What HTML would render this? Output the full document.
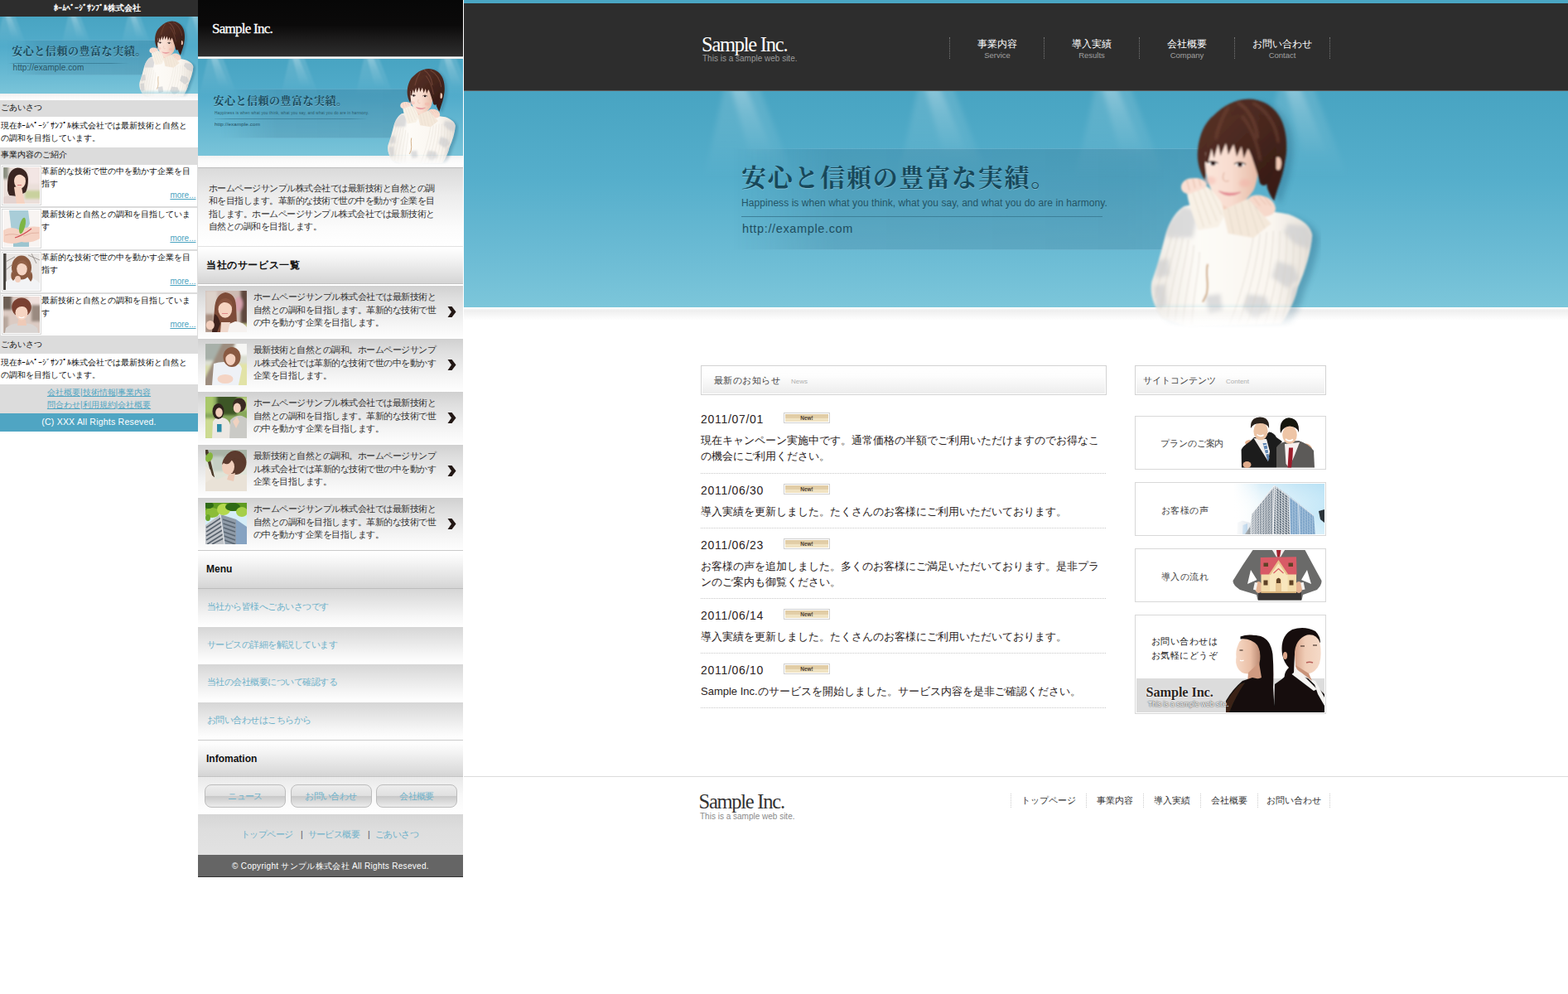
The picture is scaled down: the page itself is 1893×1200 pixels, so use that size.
<!DOCTYPE html>
<html lang="ja">
<head>
<meta charset="utf-8">
<title>Sample Inc.</title>
<style>
*{margin:0;padding:0;box-sizing:border-box;}
html,body{width:1893px;height:1200px;overflow:hidden;background:#fff;}
body{position:relative;font-family:"Liberation Sans",sans-serif;color:#333;}
.abs{position:absolute;}
.serif{font-family:"Liberation Serif",serif;}
a{color:inherit;text-decoration:none;}
/* ---------- PC ---------- */
#pc{position:absolute;left:560px;top:0;width:1333px;height:1200px;background:#fff;overflow:hidden;}
#pc .topbar{position:absolute;left:0;top:0;width:1333px;height:4px;background:#4aa6c4;}
#pc .head{position:absolute;left:0;top:4px;width:1333px;height:106px;background:#2d2d2d;border-bottom:1px solid #5e5e5e;}
#pc .logo{position:absolute;left:287px;top:35.500px;font-size:24.500px;line-height:28px;color:#fff;letter-spacing:-1.250px;white-space:nowrap;}
#pc .logosub{position:absolute;left:288px;top:60.800px;font-size:10px;line-height:12px;color:#9a9a9a;white-space:nowrap;}
#pc .nav{position:absolute;top:41px;height:26px;width:115px;border-left:1px dotted #777;text-align:center;}
#pc .nav b{display:block;font-weight:normal;font-size:12px;line-height:14px;color:#fff;margin-top:.500px;}
#pc .nav i{display:block;font-style:normal;font-size:9.500px;line-height:11px;color:#a0a0a0;margin-top:1px;}
#pc .hero{position:absolute;left:0;top:110px;width:1333px;height:261px;background:linear-gradient(#48a4c2 0%,#55aecb 40%,#6bbbd4 75%,#7cc6da 100%);overflow:hidden;}
#pc .heroshadow{position:absolute;left:0;top:371px;width:1333px;height:16px;background:linear-gradient(#fff 0,#eeeeee 25%,#f7f7f7 60%,#fff 100%);}
.spot{position:absolute;top:0;width:150px;height:140px;}
#pc .panel{position:absolute;left:286px;top:69px;width:640px;height:123px;background:linear-gradient(90deg,rgba(40,90,120,.17) 0,rgba(40,90,120,.2) 80%,rgba(40,90,120,.14) 100%);border-top:1px solid rgba(130,200,225,.45);border-bottom:1px solid rgba(130,200,225,.45);-webkit-mask-image:linear-gradient(90deg,transparent 6%,#000 24%);mask-image:linear-gradient(90deg,transparent 6%,#000 24%);}
#pc .h1{position:absolute;left:335px;top:86.500px;font-size:30px;line-height:36px;font-weight:bold;color:#1c4f61;white-space:nowrap;letter-spacing:1.750px;}
#pc .h2{position:absolute;left:335px;top:128px;font-size:12px;line-height:14px;color:#245566;white-space:nowrap;letter-spacing:.06px;}
#pc .hline{position:absolute;left:335px;top:151px;width:436px;height:1px;background:#3d8099;}
#pc .url{position:absolute;left:336px;top:157px;font-size:14.5px;line-height:18px;color:#1f4d5e;white-space:nowrap;letter-spacing:.64px;}

/* PC content */
#pc .box{position:absolute;top:441px;height:36px;border:1px solid #d2d2d2;background:linear-gradient(#fff 0,#fdfdfd 35%,#ececec 100%);box-shadow:inset 0 0 0 1px #fff;}
#pc .box b{position:absolute;left:14.500px;top:10px;font-weight:normal;font-size:11px;line-height:14px;color:#444;letter-spacing:.500px;white-space:nowrap;}
#pc .box i{position:absolute;top:14px;font-style:normal;font-size:8px;line-height:10px;color:#b0b0b0;white-space:nowrap;}
#pc .news{position:absolute;left:286px;width:489px;border-bottom:1px dotted #c8c8c8;}
#pc .news .d{position:absolute;left:0;top:12px;font-size:14px;line-height:16px;letter-spacing:.700px;color:#2a2222;white-space:nowrap;}
#pc .news .n{position:absolute;left:100px;top:12px;width:56px;height:13px;border:1px solid #d0d0d0;background:#fff;padding:1px;}
#pc .news .n span{display:block;width:52px;height:9px;background:linear-gradient(#e0cba3 0,#e3cfa9 50%,#f1e4c4 55%,#efe1c0 100%);font-size:6.5px;line-height:9px;text-align:center;color:#4a3c2c;font-weight:bold;}
#pc .news p{position:absolute;left:0;top:36px;width:520px;white-space:nowrap;font-size:13px;line-height:19px;color:#2a2222;}
#pc .bn{position:absolute;left:810px;width:231px;border:1px solid #d8d8d8;background:#fff;overflow:hidden;}
#pc .bn span{position:absolute;font-size:11px;line-height:14px;color:#444;white-space:nowrap;letter-spacing:-.1px;}
#pc .bn svg{position:absolute;}
#pc .fline{position:absolute;left:0;top:937px;width:1333px;height:1px;background:#dcdcdc;}
#pc .flogo{position:absolute;left:283.500px;top:954px;font-size:24.500px;line-height:28px;color:#333;letter-spacing:-1.250px;white-space:nowrap;}
#pc .flogosub{position:absolute;left:285px;top:980.300px;font-size:10px;line-height:12px;color:#8a8a8a;white-space:nowrap;}
#pc .fnav{position:absolute;top:957.500px;height:17.500px;border-left:1px dotted #ccc;font-size:11px;line-height:16px;color:#333;text-align:center;white-space:nowrap;}

/* ---------- Smartphone ---------- */
#sp{position:absolute;left:239px;top:0;width:320px;height:1200px;background:#fff;overflow:hidden;}
#sp .head{position:absolute;left:0;top:0;width:320px;height:68px;background:linear-gradient(#070707 0,#0b0a0a 45%,#1d1c1c 70%,#2e2e2e 100%);}
#sp .logo{position:absolute;left:17px;top:24.500px;font-size:17px;line-height:20px;color:#fff;letter-spacing:-.750px;white-space:nowrap;-webkit-text-stroke:.300px #fff;}
#sp .hl{position:absolute;left:0;top:68px;width:320px;height:3px;background:linear-gradient(#8d8d8d,#fff 40%,#e6e6e6);}
#sp .hero{position:absolute;left:0;top:71px;width:320px;height:117px;background:linear-gradient(#48a4c2 0%,#52accb 40%,#69bad3 75%,#7ac4d9 100%);overflow:hidden;}
#sp .heroshadow{position:absolute;left:0;top:188px;width:320px;height:14px;background:linear-gradient(#f1f1f1 0,#fafafa 40%,#fff 100%);}
#sp .panel{position:absolute;left:0;top:36px;width:262px;height:60px;background:linear-gradient(90deg,rgba(40,90,120,0) 0,rgba(40,90,120,.17) 20%,rgba(40,90,120,.2) 100%);border-top:1px solid rgba(130,200,225,.35);border-bottom:1px solid rgba(130,200,225,.35);-webkit-mask-image:linear-gradient(90deg,transparent 10%,#000 36%);mask-image:linear-gradient(90deg,transparent 10%,#000 36%);}
#sp .h1{position:absolute;left:18.500px;top:41.500px;font-size:13px;line-height:18px;font-weight:bold;color:#1c4f61;white-space:nowrap;letter-spacing:.500px;}
#sp .h2{position:absolute;left:20px;top:62.500px;font-size:4.700px;line-height:6px;color:#2a5a6c;white-space:nowrap;letter-spacing:.200px;}
#sp .hline{position:absolute;left:20px;top:72px;width:183px;height:1px;background:linear-gradient(90deg,rgba(50,115,140,.2),rgba(50,115,140,.6) 10%,rgba(50,115,140,.6) 90%,rgba(50,115,140,.1));}
#sp .url{position:absolute;left:20px;top:74.500px;font-size:6.200px;line-height:8px;color:#1f4d5e;white-space:nowrap;letter-spacing:.15px;}
#sp .sep{position:absolute;left:0;width:320px;height:1px;background:#bdbdbd;}
#sp .intro{position:absolute;left:0;top:203px;width:320px;height:94px;background:linear-gradient(#dadada 0,#ececec 35%,#fbfbfb 75%,#fff 100%);}
#sp .intro p{position:absolute;left:13px;top:16.500px;font-size:10.500px;line-height:15.500px;color:#333;white-space:nowrap;letter-spacing:-.52px;}
#sp .hd{position:absolute;left:0;width:320px;background:linear-gradient(#fff 0,#f4f4f4 30%,#dedede 80%,#d4d4d4 100%);border-top:1px solid #fff;}
#sp .hd b{position:absolute;left:10px;font-size:12.300px;line-height:16px;color:#111;white-space:nowrap;}
#sp .it{position:absolute;left:0;width:320px;height:62px;background:linear-gradient(#d0d0d0 0,#dcdcdc 20%,#f3f3f3 70%,#fdfdfd 100%);}
#sp .it p{position:absolute;left:67px;top:6.500px;font-size:10.500px;line-height:15.700px;color:#333;white-space:nowrap;letter-spacing:-.52px;}
#sp .it .th{position:absolute;left:9px;top:6.500px;width:50px;height:50px;overflow:hidden;}
#sp .it .ar{position:absolute;left:300px;top:25px;}
#sp .mi{position:absolute;left:0;width:320px;height:44.500px;background:linear-gradient(#d6d6d6 0,#e3e3e3 30%,#f6f6f6 75%,#fff 100%);font-size:10.500px;line-height:42.500px;padding-left:11px;color:#6fb2ca;white-space:nowrap;letter-spacing:-.52px;}
#sp .btn{position:absolute;top:947px;width:98px;height:28px;border:1px solid #bcbcbc;border-radius:8px;background:linear-gradient(#ededed 0,#e0e0e0 48%,#c9c9c9 52%,#ececec 100%);font-size:10.500px;line-height:26px;text-align:center;color:#6fb2ca;box-shadow:0 1px 0 #fff;letter-spacing:-.52px;}
#sp .flinks{position:absolute;left:0;top:983px;width:320px;height:49px;background:linear-gradient(#d6d6d6 0,#dedede 40%,#e2e2e2 100%);}
#sp .flinks span{position:absolute;top:17px;font-size:10.500px;line-height:14px;color:#6fb2ca;white-space:nowrap;letter-spacing:-.52px;}
#sp .copy{position:absolute;left:0;top:1031.500px;width:320px;height:27.500px;background:#656565;border-bottom:1px solid #333;color:#fff;font-size:10px;line-height:28px;text-align:center;white-space:nowrap;letter-spacing:.300px;}

/* ---------- Feature phone ---------- */
#fp{position:absolute;left:0;top:0;width:239px;height:1200px;background:#fff;overflow:hidden;font-size:10px;line-height:15px;color:#111;}
#fp .head{position:absolute;left:0;top:0;width:239px;height:20px;background:#2d2d2d;color:#fff;font-weight:bold;font-size:10px;line-height:19px;text-align:center;white-space:nowrap;padding-right:4px;}
#fp .hero{position:absolute;left:0;top:20px;width:239px;height:93px;background:linear-gradient(#48a4c2 0%,#52accb 40%,#69bad3 75%,#7ac4d9 100%);overflow:hidden;}
#fp .heroshadow{position:absolute;left:0;top:113px;width:239px;height:8px;background:linear-gradient(#f0f0f0,#fff);}
#fp .panel{position:absolute;left:0;top:28px;width:190px;height:43px;background:linear-gradient(90deg,rgba(40,90,120,0) 0,rgba(40,90,120,.16) 18%,rgba(40,90,120,.2) 100%);border-top:1px solid rgba(130,200,225,.35);border-bottom:1px solid rgba(130,200,225,.35);-webkit-mask-image:linear-gradient(90deg,transparent 4%,#000 26%);mask-image:linear-gradient(90deg,transparent 4%,#000 26%);}
#fp .h1{position:absolute;left:14.200px;top:33px;font-size:13px;line-height:18px;font-weight:bold;color:#1c4f61;white-space:nowrap;letter-spacing:.550px;}
#fp .hline{position:absolute;left:10px;top:56px;width:146px;height:1px;background:linear-gradient(90deg,rgba(50,115,140,0),rgba(50,115,140,.7) 8%,rgba(50,115,140,.7) 85%,rgba(50,115,140,0));}
#fp .url{position:absolute;left:15.500px;top:55.500px;font-size:10px;line-height:11px;color:#2a5565;white-space:nowrap;letter-spacing:.080px;}
#fp .hd{position:absolute;left:0;width:239px;background:#dcdcdc;padding-left:1px;white-space:nowrap;}
#fp p{position:absolute;left:1px;white-space:nowrap;}
#fp .it{position:absolute;left:1px;width:236.500px;height:50px;background:#fff;}
#fp .it .th{position:absolute;left:1px;top:1px;width:48px;height:48px;border:1px solid #d8d8d8;padding:1px;background:#fff;overflow:hidden;}
#fp .it .th i{display:block;width:41px;height:41px;}
#fp .it p{left:48.700px;top:-.500px;}
#fp .it a{position:absolute;right:1px;top:30px;color:#4aa3c0;text-decoration:underline;font-size:10px;line-height:14px;}
#fp .flinks{position:absolute;left:0;top:463.500px;width:239px;height:35.500px;background:#dcdcdc;text-align:center;color:#4fa5c2;white-space:nowrap;padding-top:2px;}
#fp .flinks a{text-decoration:underline;}
#fp .copy{position:absolute;left:0;top:499px;width:239px;height:21.500px;background:#4fa5c3;color:#fff;text-align:center;font-size:10.500px;line-height:21px;white-space:nowrap;letter-spacing:.220px;}
</style>
</head>
<body>
<svg width="0" height="0" style="position:absolute">
<defs>
<filter id="wb" x="-10%" y="-10%" width="120%" height="120%"><feGaussianBlur stdDeviation=".8"/></filter>
<filter id="wb2" x="-10%" y="-10%" width="120%" height="120%"><feGaussianBlur stdDeviation="2.2"/></filter>
<filter id="wb3" x="-10%" y="-10%" width="120%" height="120%"><feGaussianBlur stdDeviation="1.6"/></filter>
<filter id="wsh" x="-20%" y="-20%" width="140%" height="140%"><feGaussianBlur stdDeviation="3.5"/></filter>
<linearGradient id="wfade" x1="0" y1="366" x2="0" y2="396" gradientUnits="userSpaceOnUse"><stop offset="0" stop-color="#fff"/><stop offset="1" stop-color="#000"/></linearGradient>
<mask id="wmask" maskUnits="userSpaceOnUse" x="1370" y="110" width="240" height="300"><rect x="1370" y="110" width="240" height="300" fill="url(#wfade)"/></mask>
<clipPath id="wbody"><path d="M1429.6,249.1 C1420.0,254.7 1412.0,266.7 1407.3,282.7 C1402.7,300.0 1398.7,317.3 1390.4,340.0 C1388.0,353.3 1391.3,366.7 1402.7,384.3 L1433.3,394.7 L1546.7,391.3 C1557.3,376.0 1564.0,360.0 1566.9,346.7 C1576.0,326.7 1582.7,304.0 1584.3,284.0 C1582.7,273.3 1573.3,265.3 1556.0,258.7 L1546.7,257.1 L1486.7,248.0 L1446.7,245.3 Z"/></clipPath>
<linearGradient id="wskin" x1="0" y1="0" x2="1" y2="0"><stop offset="0" stop-color="#fbe6db"/><stop offset=".5" stop-color="#f8dccf"/><stop offset="1" stop-color="#e6bba6"/></linearGradient>
<linearGradient id="whair" x1="0" y1="0" x2="1" y2="1"><stop offset="0" stop-color="#5a3328"/><stop offset=".45" stop-color="#4a281f"/><stop offset="1" stop-color="#341a14"/></linearGradient>
<linearGradient id="wswt" x1="0" y1="0" x2="1" y2="0"><stop offset="0" stop-color="#efeae3"/><stop offset=".3" stop-color="#fdfbf7"/><stop offset=".75" stop-color="#faf6f0"/><stop offset="1" stop-color="#e6e0d8"/></linearGradient>
<symbol id="woman" viewBox="1380 115 215 285">
<g mask="url(#wmask)">
<g filter="url(#wsh)" opacity=".3" transform="translate(8,4)"><path d="M1429.6,249.1 C1420.0,254.7 1412.0,266.7 1407.3,282.7 C1402.7,300.0 1398.7,317.3 1390.4,340.0 C1388.0,353.3 1391.3,366.7 1402.7,384.3 L1433.3,394.7 L1546.7,391.3 C1557.3,376.0 1564.0,360.0 1566.9,346.7 C1576.0,326.7 1582.7,304.0 1584.3,284.0 C1582.7,273.3 1573.3,265.3 1556.0,258.7 L1546.7,257.1 L1486.7,248.0 L1446.7,245.3 Z" fill="#1a5877"/><path d="M1506.7,119.6 C1521.3,119.3 1540.0,127.3 1548.0,147.3 C1554.7,163.3 1554.0,184.7 1551.3,195.3 C1550.0,206.0 1546.7,216.7 1542.7,227.3 L1538.0,242.7 C1534.7,238.0 1532.0,232.7 1530.0,227.3 L1526.7,203.3 L1486.7,150.0 L1460.0,176.7 L1454.9,218.0 C1448.7,208.7 1444.7,195.3 1446.0,182.0 C1447.3,163.3 1454.7,147.3 1465.3,139.3 C1477.3,127.3 1492.0,120.0 1506.7,119.6 Z" fill="#1a5877"/></g>
<g filter="url(#wb)">
<path d="M1429.6,249.1 C1420.0,254.7 1412.0,266.7 1407.3,282.7 C1402.7,300.0 1398.7,317.3 1390.4,340.0 C1388.0,353.3 1391.3,366.7 1402.7,384.3 L1433.3,394.7 L1546.7,391.3 C1557.3,376.0 1564.0,360.0 1566.9,346.7 C1576.0,326.7 1582.7,304.0 1584.3,284.0 C1582.7,273.3 1573.3,265.3 1556.0,258.7 L1546.7,257.1 L1486.7,248.0 L1446.7,245.3 Z" fill="url(#wswt)"/>
<g clip-path="url(#wbody)"><g filter="url(#wb2)" fill="#c9cacd" opacity=".62"><path d="M1428.0,249.3 L1446.7,254.7 L1440.0,286.7 L1408.7,286.7 L1406.7,273.3 Z"/><path d="M1554.7,270.0 L1578.7,273.3 L1585.3,286.7 L1581.3,301.3 L1562.7,294.0 L1550.0,280.7 Z"/><path d="M1542.0,315.3 L1562.0,321.3 L1568.7,336.7 L1554.0,348.0 L1535.3,334.0 Z"/><path d="M1506.0,355.3 L1528.0,358.0 L1534.0,374.0 L1514.0,385.3 L1500.7,371.3 Z"/><path d="M1394.9,314.7 L1410.9,312.0 L1412.0,332.0 L1396.0,336.0 Z"/><path d="M1393.3,345.3 L1406.7,342.7 L1408.7,369.3 L1396.0,372.0 Z"/><path d="M1560.0,346.7 L1567.3,345.3 L1564.0,372.0 L1557.3,373.3 Z"/><path d="M1454.7,357.3 L1473.3,354.7 L1476.0,374.7 L1460.0,378.7 Z"/></g>
<g fill="none" stroke="#d6cfc4" stroke-width=".9" opacity=".7"><path d="M1513.3,285.3 C1508.0,320.0 1497.3,360.0 1484.0,392.0"/><path d="M1521.3,282.7 C1517.3,320.0 1506.7,360.0 1494.7,392.0"/><path d="M1529.3,280.0 C1526.7,320.0 1516.0,360.0 1505.3,392.0"/><path d="M1537.3,278.7 C1536.0,320.0 1526.7,360.0 1516.0,392.0"/><path d="M1545.3,278.7 C1545.3,320.0 1537.3,360.0 1526.7,392.0"/><path d="M1553.3,280.0 C1554.7,320.0 1546.7,360.0 1537.3,392.0"/><path d="M1561.3,282.7 C1564.0,320.0 1556.0,357.3 1546.7,390.7"/><path d="M1569.3,286.7 C1572.0,320.0 1564.0,353.3 1556.0,381.3"/><path d="M1577.3,290.7 C1578.7,314.7 1572.0,341.3 1565.3,360.0"/><path d="M1414.7,284.0 C1409.3,306.7 1400.0,333.3 1394.7,360.0"/><path d="M1421.3,285.3 C1416.0,309.3 1406.7,338.7 1401.3,373.3"/><path d="M1428.0,286.7 C1424.0,312.0 1414.7,341.3 1409.3,384.0"/><path d="M1434.7,289.3 C1432.0,314.7 1422.7,344.0 1418.7,388.0"/><path d="M1441.3,296.0 C1440.0,320.0 1432.0,346.7 1428.0,390.7"/><path d="M1448.0,304.0 C1448.0,325.3 1441.3,349.3 1438.7,392.0"/></g>
<path d="M1458.0,318.7 C1454.7,330.7 1460.0,341.3 1456.7,354.7 C1454.7,360.0 1452.7,362.7 1452.0,364.7" fill="none" stroke="#c79c6a" stroke-width="1.8"/></g>
<path d="M1473.3,243.3 L1505.3,243.3 L1500.0,260.7 L1478.7,260.7 Z" fill="#f3cdbb"/>
<path d="M1506.7,119.6 C1521.3,119.3 1540.0,127.3 1548.0,147.3 C1554.7,163.3 1554.0,184.7 1551.3,195.3 C1550.0,206.0 1546.7,216.7 1542.7,227.3 L1538.0,242.7 C1534.7,238.0 1532.0,232.7 1530.0,227.3 L1526.7,203.3 L1486.7,150.0 L1460.0,176.7 L1454.9,218.0 C1448.7,208.7 1444.7,195.3 1446.0,182.0 C1447.3,163.3 1454.7,147.3 1465.3,139.3 C1477.3,127.3 1492.0,120.0 1506.7,119.6 Z" fill="url(#whair)"/>
<path d="M1540.7,190.0 C1546.0,187.1 1548.3,195.3 1546.1,202.3 C1544.8,206.3 1542.0,206.3 1540.7,203.3 Z" fill="#f1c9b5"/>
<path d="M1455.3,184.7 C1454.0,200.7 1456.0,216.7 1462.7,230.0 C1469.3,242.0 1477.3,250.0 1485.3,252.4 C1494.7,250.0 1505.3,242.0 1513.3,230.0 C1518.7,219.3 1519.3,203.3 1518.7,190.0 L1513.3,166.0 L1464.0,167.3 Z" fill="url(#wskin)"/>
<g filter="url(#wb3)"><ellipse cx="1461" cy="218" rx="7" ry="5" fill="#f6bfb4" opacity=".6"/><ellipse cx="1503" cy="221" rx="7" ry="5" fill="#f2b5a8" opacity=".55"/></g>
<path d="M1454.9,195.3 C1454.9,182.0 1458.0,170.0 1464.0,160.7 C1473.3,144.7 1489.3,136.7 1505.3,136.7 C1521.3,138.0 1534.7,150.0 1540.0,170.0 C1542.7,184.7 1540.0,200.7 1536.0,211.3 C1533.3,220.7 1526.7,228.0 1521.1,221.3 C1518.7,211.3 1516.0,203.3 1513.3,195.3 C1512.0,191.3 1510.0,184.7 1506.7,179.3 L1501.6,191.3 L1498.7,176.7 L1493.1,189.3 L1489.3,174.0 L1482.9,186.7 L1480.0,172.7 L1473.6,188.0 L1470.7,174.0 L1465.6,191.3 L1462.7,179.3 L1458.4,196.7 Z" fill="url(#whair)"/>
<g fill="none" stroke="#8a5645" stroke-linecap="round" opacity=".55" filter="url(#wb3)"><path d="M1494.7,124.0 C1506.7,131.3 1516.0,146.0 1518.0,166.0" stroke-width="3"/><path d="M1482.7,130.0 C1476.0,140.7 1470.7,152.7 1468.0,167.3" stroke-width="2.5"/><path d="M1513.3,124.7 C1529.3,134.0 1540.0,150.0 1543.3,171.3" stroke-width="2.5"/><path d="M1500.0,140.7 C1510.7,154.0 1517.3,171.3 1521.3,192.7" stroke-width="2.5"/></g>
<ellipse cx="1464" cy="197.300" rx="5" ry="2.700" fill="#fff"/><ellipse cx="1464.500" cy="197.300" rx="3" ry="2.700" fill="#2b1713"/><path d="M1457.500,196.500 Q1464,192.500 1470.500,197" stroke="#2b1a15" stroke-width="1.400" fill="none"/>
<ellipse cx="1497" cy="198.800" rx="5.200" ry="2.700" fill="#fff"/><ellipse cx="1497" cy="198.800" rx="3.100" ry="2.700" fill="#2b1713"/><path d="M1490,198 Q1497,193.500 1504,198.500" stroke="#2b1a15" stroke-width="1.400" fill="none"/>
<path d="M1478,208 q-3.500,8 .500,10.500 q3,1 5,-.500" stroke="#e2b5a2" stroke-width="1.200" fill="none"/>
<path d="M1471.300,230.700 Q1483,240.500 1498,232 Q1484,235 1471.300,230.700 Z" fill="#e78d96" stroke="#dd7f8a" stroke-width=".800"/>
<path d="M1433.1,234.0 L1456.3,224.4 C1464.7,230.0 1472.3,239.3 1476.3,248.7 L1478.1,260.7 L1470.7,274.0 L1446.7,278.0 C1440.0,260.7 1434.7,244.7 1433.1,234.0 Z" fill="#f8f1e6"/><path d="M1476.0,253.7 L1506.9,239.7 L1526.9,261.5 L1534.7,270.0 L1513.3,287.3 L1482.7,282.0 Z" fill="#f4e8da"/>
<g fill="none" stroke="#dfd3c3" stroke-width=".9" opacity=".8"><path d="M1440.0,232.7 L1453.3,274.0 M1446.7,230.0 L1461.3,271.3 M1453.3,227.3 L1469.3,267.3 M1460.0,227.3 L1474.7,259.3"/><path d="M1482.7,251.3 L1489.3,282.0 M1490.7,248.0 L1498.7,283.3 M1498.7,244.4 L1508.0,284.7 M1506.7,241.3 L1518.7,282.0 M1514.7,248.7 L1526.7,275.3"/></g>
<path d="M1426.0,227.3 C1425.3,220.7 1430.7,215.6 1438.7,215.3 C1446.7,214.0 1454.9,216.7 1456.8,222.3 L1456.0,226.3 L1436.0,234.3 C1430.7,234.0 1426.7,231.6 1426.0,227.3 Z" fill="#f9dfd3"/><path d="M1506.7,240.0 C1510.7,235.3 1518.7,234.7 1525.3,236.7 C1534.7,239.3 1540.3,246.0 1540.0,252.9 C1538.7,258.3 1533.3,260.9 1526.7,261.5 Z" fill="#f7d9cb"/>
<path d="M1432.7,216.7 L1436.0,230.0 M1440.0,215.3 L1442.9,227.3 M1447.3,215.3 L1449.6,224.7 M1513.3,238.0 L1521.3,248.7 M1519.3,236.7 L1528.7,247.3 M1526.0,237.3 L1534.7,248.7" stroke="#e4b9a6" stroke-width="1" fill="none"/>
</g></g>
</symbol>
</defs></svg>
<svg width="0" height="0" style="position:absolute"><defs>
<linearGradient id="spg" x1="0" y1="0" x2="0" y2="1"><stop offset="0" stop-color="#fff" stop-opacity=".27"/><stop offset=".4" stop-color="#fff" stop-opacity=".13"/><stop offset="1" stop-color="#fff" stop-opacity="0"/></linearGradient>
<linearGradient id="spg2" x1="0" y1="0" x2="0" y2="1"><stop offset="0" stop-color="#fff" stop-opacity=".14"/><stop offset=".55" stop-color="#fff" stop-opacity=".075"/><stop offset="1" stop-color="#fff" stop-opacity="0"/></linearGradient>
<filter id="spb" x="-20%" y="-20%" width="140%" height="140%"><feGaussianBlur stdDeviation="3"/></filter>
<symbol id="spot" viewBox="0 0 160 120" overflow="visible">
<g filter="url(#spb)"><path d="M55,-6 L96,-6 L138,104 L30,104 Z" fill="url(#spg2)"/><path d="M62,-6 L80,-6 L116,80 L86,80 Z" fill="url(#spg)"/></g>
</symbol></defs></svg>


<svg width="0" height="0" style="position:absolute"><defs>
<filter id="tb" x="-5%" y="-5%" width="110%" height="110%"><feGaussianBlur stdDeviation=".7"/></filter>
<filter id="tb2" x="-5%" y="-5%" width="110%" height="110%"><feGaussianBlur stdDeviation="1.6"/></filter>
<symbol id="s1" viewBox="0 0 50 50"><rect width="50" height="50" fill="#cdbab2"/>
<g filter="url(#tb2)"><rect x="0" y="0" width="14" height="30" fill="#ddd2ca"/><rect x="0" y="28" width="10" height="22" fill="#a98f80"/><rect x="42.500" y="-2" width="9" height="44" fill="#5e463c"/><ellipse cx="40" cy="16" rx="5" ry="9" fill="#d7a3ae"/><rect x="40" y="40" width="12" height="12" fill="#c8c890"/></g>
<g filter="url(#tb)"><path d="M24,2 Q36,3 37,18 Q38,34 38,50 L8,50 Q10,36 11,22 Q12,4 24,2 Z" fill="#7d4b37"/><path d="M11,28 Q16,30 18,40 L14,50 L8,50 Z" fill="#40241c"/>
<path d="M36,37 Q46,38 50,44 L50,50 L22,50 L24,42 Z" fill="#f6f2f0"/><path d="M19,38 L30,38 L27,50 L18,50 Z" fill="#f0d8cc"/>
<ellipse cx="23.800" cy="22.500" rx="8.300" ry="10.300" fill="#f6d4c1"/><path d="M14.500,22 Q15,9 25,9 Q33,10 33,21 Q29,13 22,14 Q17,15 14.500,22 Z" fill="#8a5540"/>
<ellipse cx="5.800" cy="41.500" rx="5" ry="5.500" fill="#f1cdbb"/><path d="M20,27.500 h7" stroke="#e0888a" stroke-width="1"/></g></symbol>
<symbol id="s2" viewBox="0 0 50 50"><rect width="50" height="50" fill="#dcdfd2"/>
<g filter="url(#tb2)"><rect x="-2" y="-2" width="26" height="22" fill="#a7b0a9"/><rect x="36" y="-2" width="16" height="16" fill="#f6f6f4"/><rect x="36" y="24" width="16" height="28" fill="#e2e3a6"/><rect x="-2" y="26" width="12" height="14" fill="#d9dcae"/><path d="M21,-2 L37,-2 L9,52 L-2,52 L-2,44 Z" fill="#9c8c7e"/></g>
<g filter="url(#tb)"><path d="M10,24 Q22,20 32,24 Q42,22 44,30 L40,50 L8,50 Z" fill="#eef1f6"/>
<ellipse cx="32" cy="16" rx="10.500" ry="12" fill="#8a5a42"/><ellipse cx="30.300" cy="18.500" rx="6" ry="7.500" fill="#f3d0be"/><path d="M24,17 Q26,8 35,9 Q40,12 40,20 Q35,12 30,12 Q26,13 24,17 Z" fill="#8a5a42"/>
<ellipse cx="24" cy="42.500" rx="9.500" ry="5.500" fill="#f4d4c4"/></g></symbol>
<symbol id="s3" viewBox="0 0 50 50"><rect width="50" height="50" fill="#88a85c"/>
<g filter="url(#tb2)"><rect x="14" y="-2" width="24" height="24" fill="#3c5628"/><rect x="-2" y="26" width="14" height="26" fill="#cddb92"/><rect x="-2" y="-2" width="12" height="22" fill="#a9c86a"/><rect x="44" y="0" width="8" height="16" fill="#b9d080"/></g>
<g filter="url(#tb)"><path d="M9,30 Q12,24 20,25 Q28,26 30,34 L31,50 L8,50 Z" fill="#ece8e3"/><rect x="14" y="33" width="5.500" height="9.500" fill="#2b8aa6"/>
<ellipse cx="15.500" cy="17.500" rx="7" ry="9.500" fill="#2e221e"/><ellipse cx="16.500" cy="19" rx="4.300" ry="5.800" fill="#f0cdb9"/>
<path d="M30,28 Q36,22 44,23 L50,26 L50,50 L29,50 Z" fill="#cacac6"/><path d="M33,30 L38,24 L41,30 L37,38 Z" fill="#f0d2c0"/>
<ellipse cx="41" cy="10" rx="8" ry="8.500" fill="#3b2a22"/><ellipse cx="38.300" cy="13.500" rx="4.500" ry="6" fill="#f2d0bd"/></g></symbol>
<symbol id="s4" viewBox="0 0 50 50"><rect width="50" height="50" fill="#dfe3d7"/>
<g filter="url(#tb2)"><rect x="-2" y="-2" width="54" height="14" fill="#a8b4a6"/><rect x="8" y="8" width="14" height="18" fill="#c5d0c4"/></g>
<g filter="url(#tb)"><path d="M-1,0 L3,0 L11,33 L8,34 Z" fill="#4a3a2a"/><ellipse cx="4.500" cy="9" rx="4" ry="6" fill="#86b53c" transform="rotate(25 4.500 9)"/>
<path d="M0,26 Q8,30 14,36 Q24,30 36,30 L50,30 L50,50 L0,50 Z" fill="#e9e2d7"/><path d="M0,20 L6,24 L9,34 L0,40 Z" fill="#ede6dc"/>
<ellipse cx="36" cy="15.500" rx="13.500" ry="14.500" fill="#5b3a2d"/><ellipse cx="27.500" cy="20.500" rx="7.500" ry="9.500" fill="#f1cfbc"/><path d="M20,18 Q22,4 36,3 Q46,6 48,18 Q40,8 32,12 Q28,20 22,16 Z" fill="#5b3a2d"/><path d="M28,30 L36,28 L34,38 L26,36 Z" fill="#eccab7"/></g></symbol>
<symbol id="s5" viewBox="0 0 50 50"><rect width="50" height="50" fill="#d5edf7"/>
<g filter="url(#tb)"><path d="M18,14 L0,27 L0,50 L23,50 Z" fill="#c0c4c9"/><path d="M18,14 L37,20 L37,50 L23,50 Z" fill="#8f9ba8"/><path d="M37,20 L50,29 L50,50 L37,50 Z" fill="#86a3c2"/>
<path d="M1,30 L19,18 M1,35 L19.500,23 M1,40 L20,28 M1,45 L20.500,33 M2,50 L21,38 M8,50 L21.500,43" stroke="#59636e" stroke-width="1.700"/>
<path d="M21,20 L36,25 M21.500,25 L36,30 M22,30 L36,35 M22,35 L36,40 M22.500,40 L36,45 M23,45 L36,50" stroke="#5a6672" stroke-width="1.600"/>
<path d="M18,14 L23,50" stroke="#e3e6e9" stroke-width="1.300"/>
<rect x="-1" y="-1" width="52" height="11" fill="#5f9a22"/><ellipse cx="8" cy="12" rx="9" ry="6" fill="#8bbd38"/><ellipse cx="22" cy="8" rx="8" ry="7" fill="#b4d84e"/><ellipse cx="33" cy="5" rx="9" ry="5" fill="#2f6a12"/><ellipse cx="44" cy="11" rx="7" ry="6" fill="#a5cf4a"/><ellipse cx="4" cy="3" rx="6" ry="4" fill="#2f6a12"/><ellipse cx="3" cy="18" rx="3" ry="4" fill="#6aa52a"/></g></symbol>
<symbol id="f1" viewBox="0 0 44 44"><rect width="44" height="44" fill="#ebdfda"/>
<g filter="url(#tb2)"><rect x="-2" y="-2" width="8" height="16" fill="#8c9182"/><rect x="26" y="28" width="20" height="10" fill="#c9d19e"/><rect x="30" y="0" width="14" height="20" fill="#f3e6e4"/></g>
<g filter="url(#tb)"><path d="M17,.500 Q29,1 30,14 Q30,24 27,30 L12,38 Q4,34 5,22 Q5,2 17,.500 Z" fill="#3a2622"/><path d="M0,36 Q8,32 18,36 L20,44 L0,44 Z" fill="#e4d4d1"/>
<ellipse cx="20" cy="16.500" rx="7" ry="9.300" fill="#f7d8c8"/><path d="M12,16 Q12,5 20,5 Q27,6 28,14 Q22,8 18,9 Q14,10 12,16 Z" fill="#3a2622"/>
<path d="M13,24 Q18,22 22,24 L26,44 L16,44 Z" fill="#f5d3c2"/><path d="M17,21.500 h5" stroke="#d66a70" stroke-width=".900"/></g></symbol>
<symbol id="f2" viewBox="0 0 44 44"><rect width="44" height="44" fill="#f8f4f2"/>
<g filter="url(#tb)"><path d="M7,0 L30,0 L32,16 L26,28 L10,26 Z" fill="#a9cdd8"/><rect x="12" y="38" width="19" height="7" fill="#9cc5cf"/>
<path d="M0,24 Q10,18 20,24 Q30,18 44,20 L44,34 Q34,40 22,38 Q10,42 0,38 Z" fill="#f5d2c3"/><path d="M2,30 Q12,27 22,31 M24,31 Q34,26 43,27" stroke="#e4b3a3" stroke-width="1" fill="none"/>
<ellipse cx="23" cy="18.500" rx="3.300" ry="10" fill="#7db544" transform="rotate(14 23 18.500)"/><path d="M14,33 Q24,30 34,22" stroke="#d04a50" stroke-width="1.100" fill="none"/></g></symbol>
<symbol id="f3" viewBox="0 0 44 44"><rect width="44" height="44" fill="#eae7e5"/>
<g filter="url(#tb)"><rect x="0" y="0" width="3.500" height="44" fill="#4a4540"/><path d="M3,10 L14,4 M3,20 L10,14 M30,2 L44,8 M34,0 L40,12" stroke="#8c8681" stroke-width=".800"/>
<path d="M3,34 Q12,27 24,29 Q38,28 44,36 L44,44 L3,44 Z" fill="#f2f3f5"/>
<ellipse cx="22" cy="17" rx="12" ry="14.500" fill="#8a5a40"/><path d="M10,22 Q8,30 12,33 L16,28 Z M34,22 Q37,30 33,34 L29,28 Z" fill="#8a5a40"/>
<ellipse cx="22.500" cy="18.500" rx="6.300" ry="8" fill="#f5d5c4"/><path d="M15.500,18 Q16,8 24,8 Q30,10 30,18 Q26,11 21,12 Q17,13 15.500,18 Z" fill="#94634a"/>
<ellipse cx="17.500" cy="31" rx="3.500" ry="4" fill="#f2cfbd"/></g></symbol>
<symbol id="f4" viewBox="0 0 44 44"><rect width="44" height="44" fill="#dccbc3"/>
<g filter="url(#tb2)"><rect x="-2" y="-2" width="12" height="18" fill="#6d5e54"/><rect x="34" y="10" width="12" height="20" fill="#9a8a80"/><rect x="30" y="-2" width="16" height="12" fill="#efe0dc"/><rect x="-2" y="24" width="8" height="22" fill="#b7a79c"/></g>
<g filter="url(#tb)"><path d="M3,38 Q12,31 22,33 Q34,31 41,38 L42,44 L2,44 Z" fill="#d9d5d3"/><path d="M18,28 L27,28 L28,35 L17,35 Z" fill="#efcab7"/>
<ellipse cx="22" cy="13" rx="11.800" ry="11.500" fill="#7a4030"/><ellipse cx="22" cy="19.500" rx="7.500" ry="9" fill="#f6d4c2"/><path d="M13,20 Q12,7 22,6 Q32,7 31,20 Q28,11 22,12 Q16,12 13,20 Z" fill="#7a4030"/>
<path d="M18.500,24.500 q3.500,2.500 7,0" stroke="#fff" stroke-width="1.100" fill="none"/></g></symbol>
</defs></svg>
<!-- ================= Feature phone ================= -->
<div id="fp">
  <div class="head">ﾎｰﾑﾍﾟｰｼﾞｻﾝﾌﾟﾙ株式会社</div>
  <div class="hero">
    <svg class="abs" style="left:-6px;top:-4px" width="256" height="100" viewBox="846 98 760 297">
      <use href="#spot" x="820" y="110" width="160" height="120"/>
      <use href="#spot" x="1054" y="110" width="160" height="120"/>
      <use href="#spot" x="1268" y="110" width="160" height="120"/>
      <use href="#spot" x="1489" y="110" width="160" height="120"/>
    </svg>
    <div class="panel"></div>
    <div class="h1" style="font-family:'Liberation Serif','Noto Serif CJK SC',serif;color:#17485a;text-shadow:0 .6px 0 rgba(255,255,255,.28)">安心と信頼の豊富な実績。</div>
    <div class="hline"></div>
    <div class="url">http://example.com</div>
  </div>
  <div class="heroshadow"></div>
  <svg class="abs" style="left:164.800px;top:24.200px" width="72" height="95.500"><use href="#woman"/></svg>
  <div class="hd" style="top:121px;height:20px;line-height:18px">ごあいさつ</div>
  <p style="top:144px">現在ﾎｰﾑﾍﾟｰｼﾞｻﾝﾌﾟﾙ株式会社では最新技術と自然と<br>の調和を目指しています。</p>
  <div class="hd" style="top:178px;height:229px;line-height:18px">事業内容のご紹介</div>
  <div class="it" style="top:199px"><div class="th"><svg width="44" height="44" style="display:block"><use href="#f1"/></svg></div><p>革新的な技術で世の中を動かす企業を目<br>指す</p><a>more...</a></div>
  <div class="it" style="top:251px"><div class="th"><svg width="44" height="44" style="display:block"><use href="#f2"/></svg></div><p>最新技術と自然との調和を目指していま<br>す</p><a>more...</a></div>
  <div class="it" style="top:303px"><div class="th"><svg width="44" height="44" style="display:block"><use href="#f3"/></svg></div><p>革新的な技術で世の中を動かす企業を目<br>指す</p><a>more...</a></div>
  <div class="it" style="top:355px"><div class="th"><svg width="44" height="44" style="display:block"><use href="#f4"/></svg></div><p>最新技術と自然との調和を目指していま<br>す</p><a>more...</a></div>
  <div class="hd" style="top:405px;height:22px;line-height:22px">ごあいさつ</div>
  <p style="top:430px">現在ﾎｰﾑﾍﾟｰｼﾞｻﾝﾌﾟﾙ株式会社では最新技術と自然と<br>の調和を目指しています。</p>
  <div class="flinks"><a>会社概要</a>|<a>技術情報</a>|<a>事業内容</a><br><a>問合わせ</a>|<a>利用規約</a>|<a>会社概要</a></div>
  <div class="copy">(C) XXX All Rights Reseved.</div>
</div>
<!-- ================= Smartphone ================= -->
<div id="sp">
  <div class="head"><div class="logo serif">Sample Inc.</div></div>
  <div class="hl"></div>
  <div class="hero">
    <svg class="abs" style="left:0;top:-8px" width="320" height="125" viewBox="846 91 760 297">
      <use href="#spot" x="820" y="110" width="160" height="120"/>
      <use href="#spot" x="1054" y="110" width="160" height="120"/>
      <use href="#spot" x="1268" y="110" width="160" height="120"/>
      <use href="#spot" x="1489" y="110" width="160" height="120"/>
    </svg>
    <div class="panel"></div>
    <div class="h1" style="font-family:'Liberation Serif','Noto Serif CJK SC',serif;color:#17485a;text-shadow:0 .6px 0 rgba(255,255,255,.28)">安心と信頼の豊富な実績。</div>
    <div class="h2">Happiness is when what you think, what you say, and what you do are in harmony.</div>
    <div class="hline"></div>
    <div class="url">http://example.com</div>
  </div>
  <div class="heroshadow"></div>
  <div class="sep" style="top:202px"></div>
  <svg class="abs" style="left:224.600px;top:81.400px" width="90.300" height="119.700"><use href="#woman"/></svg>
  <div class="intro"><p>ホームページサンプル株式会社では最新技術と自然との調<br>和を目指します。革新的な技術で世の中を動かす企業を目<br>指します。ホームページサンプル株式会社では最新技術と<br>自然との調和を目指します。</p></div>
  <div class="sep" style="top:297px;background:#e2e2e2"></div>
  <div class="hd" style="top:298px;height:44px"><b style="top:12.500px;letter-spacing:.600px">当社のサービス一覧</b></div>
  <div class="sep" style="top:342px;background:#c4c4c4"></div>
  <div class="sep" style="top:343px;background:#fff"></div>
  <div class="it" style="top:344.5px"><div class="th"><svg width="50" height="50" style="display:block"><use href="#s1"/></svg></div><p>ホームページサンプル株式会社では最新技術と<br>自然との調和を目指します。革新的な技術で世<br>の中を動かす企業を目指します。</p><svg class="ar" width="12" height="13" viewBox="0 0 12 13"><path d="M1.500,0 L6.500,0 L11.500,6.500 L6.500,13 L1.500,13 L6,6.500 Z" fill="#231815"/></svg></div>
  <div class="it" style="top:408.5px"><div class="th"><svg width="50" height="50" style="display:block"><use href="#s2"/></svg></div><p>最新技術と自然との調和。ホームページサンプ<br>ル株式会社では革新的な技術で世の中を動かす<br>企業を目指します。</p><svg class="ar" width="12" height="13" viewBox="0 0 12 13"><path d="M1.500,0 L6.500,0 L11.500,6.500 L6.500,13 L1.500,13 L6,6.500 Z" fill="#231815"/></svg></div>
  <div class="it" style="top:472.5px"><div class="th"><svg width="50" height="50" style="display:block"><use href="#s3"/></svg></div><p>ホームページサンプル株式会社では最新技術と<br>自然との調和を目指します。革新的な技術で世<br>の中を動かす企業を目指します。</p><svg class="ar" width="12" height="13" viewBox="0 0 12 13"><path d="M1.500,0 L6.500,0 L11.500,6.500 L6.500,13 L1.500,13 L6,6.500 Z" fill="#231815"/></svg></div>
  <div class="it" style="top:536.5px"><div class="th"><svg width="50" height="50" style="display:block"><use href="#s4"/></svg></div><p>最新技術と自然との調和。ホームページサンプ<br>ル株式会社では革新的な技術で世の中を動かす<br>企業を目指します。</p><svg class="ar" width="12" height="13" viewBox="0 0 12 13"><path d="M1.500,0 L6.500,0 L11.500,6.500 L6.500,13 L1.500,13 L6,6.500 Z" fill="#231815"/></svg></div>
  <div class="it" style="top:600.5px"><div class="th"><svg width="50" height="50" style="display:block"><use href="#s5"/></svg></div><p>ホームページサンプル株式会社では最新技術と<br>自然との調和を目指します。革新的な技術で世<br>の中を動かす企業を目指します。</p><svg class="ar" width="12" height="13" viewBox="0 0 12 13"><path d="M1.500,0 L6.500,0 L11.500,6.500 L6.500,13 L1.500,13 L6,6.500 Z" fill="#231815"/></svg></div>
  <div class="sep" style="top:664px;background:#c9c9c9"></div>
  <div class="hd" style="top:665px;height:44.500px"><b style="top:13px;font-size:12px">Menu</b></div>
  <div class="sep" style="top:709.500px;background:#bdbdbd"></div>
  <div class="mi" style="top:711px">当社から皆様へごあいさつです</div>
  <div class="mi" style="top:756.500px">サービスの詳細を解説しています</div>
  <div class="mi" style="top:802px">当社の会社概要について確認する</div>
  <div class="mi" style="top:847.500px">お問い合わせはこちらから</div>
  <div class="sep" style="top:892.500px;background:#c9c9c9"></div>
  <div class="hd" style="top:893.500px;height:43px"><b style="top:13.500px;font-size:12px">Infomation</b></div>
  <div class="sep" style="top:936.500px;background:#c4c4c4"></div>
  <div class="abs" style="left:0;top:937.500px;width:320px;height:46px;background:linear-gradient(#e9e9e9,#f8f8f8 50%,#fff)"></div>
  <div class="btn" style="left:8px">ニュース</div>
  <div class="btn" style="left:111.500px">お問い合わせ</div>
  <div class="btn" style="left:215px">会社概要</div>
  <div class="flinks"><span style="left:52px">トップページ</span><span style="left:124px;color:#555">|</span><span style="left:132.500px">サービス概要</span><span style="left:205px;color:#555">|</span><span style="left:214px">ごあいさつ</span></div>
  <div class="copy">© Copyright サンプル株式会社 All Rights Reseved.</div>
</div>
<!-- ================= PC ================= -->
<div id="pc">
  <div class="topbar"></div>
  <div class="head">
    <div class="logo serif">Sample Inc.</div>
    <div class="logosub">This is a sample web site.</div>
    <div class="nav" style="left:586px"><b>事業内容</b><i>Service</i></div>
    <div class="nav" style="left:700px"><b>導入実績</b><i>Results</i></div>
    <div class="nav" style="left:815px"><b>会社概要</b><i>Company</i></div>
    <div class="nav" style="left:930px;width:116px;border-right:1px dotted #777"><b>お問い合わせ</b><i>Contact</i></div>
  </div>
  <div class="hero">
    <svg class="abs" style="left:286px;top:0;overflow:visible" width="760" height="261" viewBox="846 110 760 261">
      <use href="#spot" x="820" y="110" width="160" height="120"/>
      <use href="#spot" x="1054" y="110" width="160" height="120"/>
      <use href="#spot" x="1268" y="110" width="160" height="120"/>
      <use href="#spot" x="1489" y="110" width="160" height="120"/>
    </svg>
    <div class="panel"></div>
    <div class="h1" style="font-family:'Liberation Serif','Noto Serif CJK SC',serif;color:#17485a;text-shadow:0 1px 0 rgba(255,255,255,.28)">安心と信頼の豊富な実績。</div>
    <div class="h2">Happiness is when what you think, what you say, and what you do are in harmony.</div>
    <div class="hline"></div>
    <div class="url">http://example.com</div>
  </div>
  <div class="heroshadow"></div>
  <svg class="abs" style="left:820px;top:115px" width="215" height="285"><use href="#woman"/></svg>

  <div class="box" style="left:286px;width:490px"><b>最新のお知らせ</b><i style="left:108px">News</i></div>
  <div class="box" style="left:810px;width:231px"><b style="left:8.500px;letter-spacing:0">サイトコンテンツ</b><i style="left:109px">Content</i></div>

  <div class="news" style="top:486px;height:86px"><div class="d">2011/07/01</div><div class="n"><span>New!</span></div><p>現在キャンペーン実施中です。通常価格の半額でご利用いただけますのでお得なこ<br>の機会にご利用ください。</p></div>
  <div class="news" style="top:572px;height:66px"><div class="d">2011/06/30</div><div class="n"><span>New!</span></div><p>導入実績を更新しました。たくさんのお客様にご利用いただいております。</p></div>
  <div class="news" style="top:638px;height:85px"><div class="d">2011/06/23</div><div class="n"><span>New!</span></div><p>お客様の声を追加しました。多くのお客様にご満足いただいております。是非プラ<br>ンのご案内も御覧ください。</p></div>
  <div class="news" style="top:723px;height:66px"><div class="d">2011/06/14</div><div class="n"><span>New!</span></div><p>導入実績を更新しました。たくさんのお客様にご利用いただいております。</p></div>
  <div class="news" style="top:789px;height:66px"><div class="d">2011/06/10</div><div class="n"><span>New!</span></div><p>Sample Inc.のサービスを開始しました。サービス内容を是非ご確認ください。</p></div>

  <div class="bn" id="bn1" style="top:502px;height:65px"><svg width="229" height="63" viewBox="1371 503 229 63" style="left:0;top:0">
<defs><filter id="b1"><feGaussianBlur stdDeviation=".5"/></filter></defs>
<g filter="url(#b1)">
<ellipse cx="1507" cy="534" rx="4" ry="2.6" fill="#e3b08e" transform="rotate(-20 1507 534)"/>
<ellipse cx="1579" cy="539.5" rx="5.5" ry="3.2" fill="#e3b08e" transform="rotate(35 1579 539.5)"/>
<path d="M1499,564.5 L1498.6,543 Q1500,539 1509,533 L1514,528 L1527,527 L1532,521.5 Q1538,522 1541,528 L1548,533 L1542,540 L1541,564.5 Z" fill="#1d1b1b"/>
<path d="M1541,564.5 L1541,540 Q1544,535 1552,533 L1568,532 Q1580,536 1586,544 L1587,564.5 Z" fill="#5b5a58"/>
<path d="M1513.5,529 L1529,530 L1533,545 L1531,557 Z" fill="#f4f1ee"/>
<path d="M1524.5,535 L1529,535 L1532.5,553 L1530.5,557 Z" fill="#5f86b3"/>
<path d="M1525.5,538 l4,-1 M1527,543 l4,-1 M1528,548 l4,-1" stroke="#fff" stroke-width="1.2"/>
<path d="M1551,536 L1569,534 L1562,552 L1556,564.5 L1552.5,560 Z" fill="#f6efee"/>
<path d="M1556,540.5 L1561,540.5 L1560.5,552 L1559,564.5 L1554.5,564.5 Z" fill="#9c1a2c"/>
<ellipse cx="1505.5" cy="561" rx="5" ry="4" fill="#e0ab8b"/>
<ellipse cx="1522" cy="520.5" rx="8.6" ry="10.8" fill="#ecc3a4"/>
<path d="M1510,517 Q1509,504 1521,503.6 Q1533,503.5 1532,517 Q1530,511 1521,511 Q1513,511 1510,517 Z" fill="#2b201b"/>
<ellipse cx="1557" cy="525" rx="8.8" ry="11" fill="#eec5a6"/>
<path d="M1546,523 Q1543.5,506 1556,504.3 Q1569,505 1568,522 Q1566,515 1557,514.5 Q1549,515 1546,523 Z" fill="#17120f"/>
<path d="M1517.5,524.5 q4,3.5 8,.5" stroke="#fff" stroke-width="1.6" fill="none"/>
<path d="M1552,530 q4.5,4 9,.5" stroke="#fff" stroke-width="1.8" fill="none"/>
</g></svg><span style="left:30px;top:25px">プランのご案内</span></div>
  <div class="bn" id="bn2" style="top:582px;height:65px"><svg width="229" height="63" viewBox="1371 583 229 63" style="left:0;top:0">
<defs>
<linearGradient id="sky" x1="0" y1="0" x2="1" y2="0"><stop offset="0" stop-color="#fff"/><stop offset=".25" stop-color="#f3fafd"/><stop offset=".7" stop-color="#d3edf9"/><stop offset="1" stop-color="#c3e7f8"/></linearGradient>
<linearGradient id="skyv" x1="0" y1="0" x2="0" y2="1"><stop offset="0" stop-color="#9fd4ef" stop-opacity=".3"/><stop offset=".6" stop-color="#fff" stop-opacity="0"/><stop offset="1" stop-color="#fff" stop-opacity=".35"/></linearGradient>
<linearGradient id="skyf" x1="0" y1="0" x2="1" y2="0"><stop offset="0" stop-color="#fff"/><stop offset=".3" stop-color="#fff" stop-opacity="0"/></linearGradient>
<pattern id="win1" width="3.2" height="3" patternUnits="userSpaceOnUse" patternTransform="skewY(-49)"><rect width="3.2" height="3" fill="#d4d8dc"/><rect x=".9" y=".9" width="2.3" height="2.1" fill="#7e8a96"/></pattern>
<pattern id="win2" width="3.4" height="3" patternUnits="userSpaceOnUse" patternTransform="skewY(36)"><rect width="3.4" height="3" fill="#dfe3e6"/><rect x="1" y=".9" width="2.4" height="2.1" fill="#5f6d7b"/></pattern>
<pattern id="win3" width="3" height="3.4" patternUnits="userSpaceOnUse" patternTransform="skewY(38)"><rect width="3" height="3.4" fill="#7ea5c9"/><rect x="0" y="0" width=".8" height="3.4" fill="#a9c5de"/><rect x="0" y="0" width="3" height=".7" fill="#9dbbd6"/></pattern>
<filter id="b2"><feGaussianBlur stdDeviation=".45"/></filter>
</defs>
<rect x="1489" y="584" width="110" height="61" fill="url(#sky)"/>
<rect x="1489" y="584" width="110" height="61" fill="url(#skyv)"/>
<g filter="url(#b2)">
<path d="M1493.5,645 L1494,631 L1500,628.5 L1509,631 L1509,645 Z" fill="#cfd9e2"/>
<path d="M1500,645 L1500.5,634 L1506,632 L1506,645 Z" fill="#7fb0d8"/>
<path d="M1538.75,586 L1511.5,620 L1508,645 L1537,645 Z" fill="url(#win1)"/>
<path d="M1538.75,586 L1556,598.5 L1557.5,645 L1537,645 Z" fill="url(#win2)"/>
<path d="M1556,598.5 L1586,622.5 L1588,645 L1557.5,645 Z" fill="url(#win3)"/>
<path d="M1538.75,586 L1537,645" stroke="#eef0f2" stroke-width="1.4"/>
<path d="M1556,598.5 L1557.5,645" stroke="#e6eaee" stroke-width="1.2"/>
<path d="M1567.5,608 L1569,645" stroke="#c9d9e8" stroke-width="1.3"/>
<path d="M1538.75,586 L1511.5,620" stroke="#eef0f2" stroke-width="1.2"/>
<path d="M1538.75,586 L1586,622.5" stroke="#e4e9ee" stroke-width="1"/>
<path d="M1503,645 L1509,636 L1509,645 Z" fill="#4c545c"/>
<path d="M1592,617 L1599,615 L1599,631 L1594,627 Z" fill="#2c3338"/>
</g>
<rect x="1489" y="584" width="110" height="61" fill="url(#skyf)"/>
</svg><span style="left:30.500px;top:25.500px;letter-spacing:.600px">お客様の声</span></div>
  <div class="bn" id="bn3" style="top:662px;height:65px"><svg width="229" height="63" viewBox="1371 663 229 63" style="left:0;top:0">
<defs><filter id="b3"><feGaussianBlur stdDeviation=".45"/></filter></defs>
<g filter="url(#b3)">
<path d="M1512.5,664 L1536,664 L1543.5,670 L1551,664 L1575.5,664 Q1584,680 1595.5,701 Q1596,706 1590,712 L1573,718 L1571.5,724.5 L1518.5,724.5 L1517,718 L1497,712 Q1488,706 1488.5,701 Q1500,682 1512.5,664 Z" fill="#6a6a69"/>
<path d="M1510,688 L1517.5,700 L1506,705 Z M1578,688 L1571,700 L1583,705 Z" fill="#fff"/>
<path d="M1536,664 L1551,664 L1546,672.5 L1541,672.5 Z" fill="#f3eeee"/>
<path d="M1541,664 L1546.5,664 L1545,672.5 L1542,672.5 Z" fill="#a3202f"/>
<rect x="1519" y="715" width="52" height="9.5" fill="#373635"/>
<ellipse cx="1519.5" cy="709" rx="4.5" ry="7" fill="#e6b594"/>
<ellipse cx="1568" cy="709" rx="4.5" ry="7" fill="#e6b594"/>
<rect x="1514" y="703" width="3.5" height="9" fill="#f5f2f0" transform="rotate(12 1515 707)"/>
<rect x="1571" y="703" width="3.5" height="9" fill="#f5f2f0" transform="rotate(-12 1573 707)"/>
<rect x="1522.5" y="692" width="42.5" height="23.5" fill="#f3dcab"/>
<path d="M1521.8,673 L1565,672.3 L1565.5,693.5 L1521.5,693.5 Z" fill="#d85a66"/>
<path d="M1543.5,677 L1554.5,693.5 L1554.5,715.5 L1533,715.5 L1533,693.5 Z" fill="#f8e6bd"/>
<path d="M1543.5,676 L1555.5,694 L1553,694 L1543.5,680 L1534,694 L1531.5,694 Z" fill="#e9c28e"/>
<path d="M1537.5,692 L1543.5,686.5 L1549.5,692" stroke="#d85a66" stroke-width="1.1" fill="none"/>
<path d="M1540,715 L1540,700 Q1543.5,695 1547,700 L1547,715 Z" fill="#e8c795"/>
<path d="M1541,704 L1541,699.5 Q1543.5,696 1546,699.5 L1546,704 Z" fill="#5f4326"/>
<rect x="1525.500" y="679.500" width="5.500" height="4.500" fill="#5f4326"/><rect x="1555.500" y="679.500" width="5.500" height="4.500" fill="#5f4326"/>
<rect x="1525.500" y="700.500" width="5" height="6" fill="#5f4326"/><rect x="1556.500" y="700.500" width="5" height="6" fill="#5f4326"/>
<rect x="1522.500" y="714" width="42.500" height="2" fill="#d9b37c"/>
</g></svg><span style="left:30.500px;top:26px;letter-spacing:.600px">導入の流れ</span></div>
  <div class="bn" id="bn4" style="top:742px;height:120px"><svg width="229" height="118" viewBox="1371 743 229 118" style="left:0;top:0">
<defs><filter id="b4"><feGaussianBlur stdDeviation=".55"/></filter>
<linearGradient id="sk4" x1="0" y1="0" x2="1" y2="0"><stop offset="0" stop-color="#f6d9c6"/><stop offset=".6" stop-color="#eabfa6"/><stop offset="1" stop-color="#b98871"/></linearGradient>
<linearGradient id="sk5" x1="0" y1="0" x2="1" y2="0"><stop offset="0" stop-color="#d6a187"/><stop offset=".4" stop-color="#f0cdb7"/><stop offset="1" stop-color="#f5dac8"/></linearGradient>
</defs>
<rect x="1372" y="819" width="227" height="41" fill="#dcdcdc"/>
<g filter="url(#b4)">
<path d="M1498,769 Q1508,765 1522,768 Q1534,772 1536.500,790 Q1538,810 1537,830 L1539,860 L1500,860 L1512,815 L1516,780 Z" fill="#15100e"/>
<path d="M1494.500,779 Q1497,770 1507,769.500 Q1516,771 1520,780 Q1523,792 1520,803 Q1517,812 1508,813.500 Q1498,814 1494,806 Q1491,800 1492.500,793 Q1491.500,786 1494.500,779 Z" fill="url(#sk4)"/>
<path d="M1507,812 L1520,800 L1523,818 L1506,824 Z" fill="#cf9a80"/>
<path d="M1497.500,768.500 Q1510,764 1524,770 L1529,800 L1521,806 Q1524,790 1518,779 Q1510,770 1497.500,771.500 Z" fill="#15100e"/>
<path d="M1480,860 L1480,846 Q1488,832 1500,822 L1512,818 L1530,822 L1541,860 Z" fill="#14110f"/>
<path d="M1480,848 Q1486,838 1497,826 L1503,824 Q1492,840 1484,860 L1480,860 Z" fill="#3a2418"/>
<path d="M1538,860 L1539,826 Q1548,820 1557,812 L1572,812 L1599,838 L1599,860 Z" fill="#131110"/>
<path d="M1556,811 L1566,806 L1587,826 L1591,838 L1599,852 L1599,842 L1588,822 Z" fill="#f3f1ef"/>
<path d="M1557,812 L1566,808 L1590,832 L1586,834 Z" fill="#f6f4f2"/>
<path d="M1548,790 Q1545,768 1560,760 Q1575,755 1588,762 Q1594,768 1594,776 L1580,768 Q1566,772 1563,790 L1562,812 Q1556,816 1551,822 Q1549,812 1556,806 Q1550,800 1548,790 Z" fill="#15100e"/>
<path d="M1563,790 Q1563,772 1578,766.500 Q1590,765 1593.500,776 Q1596,790 1593,801 Q1589,812 1578,814 Q1568,813 1564,805 Z" fill="url(#sk5)"/>
<path d="M1564,803 L1580,813 L1584,822 L1566,808 Z" fill="#c99379"/>
<ellipse cx="1551.500" cy="791.500" rx="2.600" ry="4.500" fill="#d9a388"/>
<path d="M1497,797 q2,1.500 4.500,0" stroke="#fff" stroke-width="1.200" fill="none"/>
<path d="M1577,800 q4,-1.500 8,0" stroke="#b8605a" stroke-width="1.400" fill="none"/>
<path d="M1496.500,785 h4 M1570,780 h5 M1585,779 h5" stroke="#2a1a14" stroke-width="1.200"/>
</g></svg>
<b class="serif" style="position:absolute;left:12.500px;top:83.500px;font-size:16.300px;line-height:18px;color:#2b2622;letter-spacing:-.1px;white-space:nowrap;text-shadow:0 0 2px #fff,0 0 2px #fff">Sample Inc.</b>
<span style="left:15px;top:101px;font-size:8.500px;line-height:12px;color:#fff;letter-spacing:0;text-shadow:0 0 1px #555,0 0 1.500px #666,0 0 2px #888">This is a sample web site.</span><span style="left:19px;top:23.500px;color:#222;letter-spacing:.450px">お問い合わせは</span><span style="left:19px;top:40.700px;color:#222;letter-spacing:.450px">お気軽にどうぞ</span></div>

  <div class="fline"></div>
  <div class="flogo serif">Sample Inc.</div>
  <div class="flogosub">This is a sample web site.</div>
  <div class="fnav" style="left:660px;width:91px">トップページ</div>
  <div class="fnav" style="left:751px;width:69px">事業内容</div>
  <div class="fnav" style="left:820px;width:69px">導入実績</div>
  <div class="fnav" style="left:889px;width:69px">会社概要</div>
  <div class="fnav" style="left:958px;width:88px;border-right:1px dotted #ccc">お問い合わせ</div>
</div>
</body>
</html>
